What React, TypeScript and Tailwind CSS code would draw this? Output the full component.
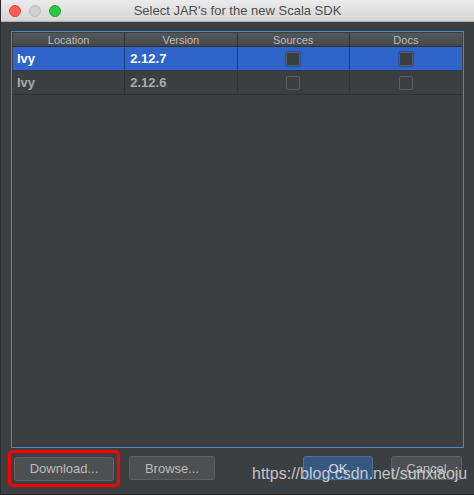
import React from "react";

interface JarRow {
  location: string;
  version: string;
  selected: boolean;
}

const rows: JarRow[] = [
  { location: "Ivy", version: "2.12.7", selected: true },
  { location: "Ivy", version: "2.12.6", selected: false },
];

const Checkbox: React.FC<{ active: boolean }> = ({ active }) =>
  active ? (
    <div className="w-[14px] h-[14px] rounded-[2px] bg-[#3c3f41] border border-[#5b5e60] shadow-[0_0_0_1px_#2a4f96]" />
  ) : (
    <div className="w-[14px] h-[14px] rounded-[2px] border border-[#5a5d5f]" />
  );

const Button: React.FC<{ label: string; primary?: boolean; className?: string }> = ({
  label,
  primary,
  className = "",
}) => (
  <button
    className={
      (primary
        ? "bg-[#365880] border-[#4c708c] text-[#d6dde6] "
        : "bg-[#4c5052] border-[#5e6162] text-[#bbbbbb] ") +
      "h-[24px] rounded-[3px] border text-[13px] leading-none " +
      className
    }
  >
    {label}
  </button>
);

export default function App() {
  return (
    <div
      className="relative w-[474px] h-[495px] bg-[#3c3f41] flex flex-col overflow-hidden border-l border-b border-[#2b2b2b]"
      style={{ fontFamily: '"Liberation Sans", Arial, sans-serif' }}
    >
      {/* Title bar */}
      <div className="h-[22px] grid grid-cols-[1fr_auto_1fr] items-center bg-gradient-to-b from-[#ebebeb] to-[#d5d5d5] border-b border-[#b3b3b3]">
        <div className="flex items-center gap-[8px] pl-[8px]">
          <div className="w-[12px] h-[12px] rounded-full bg-[#fc5f57] border border-[#e0443e]" />
          <div className="w-[12px] h-[12px] rounded-full bg-[#cfcfcf] border border-[#bfbfbf]" />
          <div className="w-[12px] h-[12px] rounded-full bg-[#2bc840] border border-[#1aab29]" />
        </div>
        <div className="text-[13px] text-[#4d4d4d]">Select JAR's for the new Scala SDK</div>
        <div />
      </div>

      {/* Table */}
      <div className="px-[10px] pt-[9px]">
        <div className="h-[417px] border border-[#4a88c7] p-[1px]">
          <div className="grid grid-cols-4 h-[14px] bg-gradient-to-b from-[#53575a] to-[#45494b] border-b border-[#2f3133]">
            {["Location", "Version", "Sources", "Docs"].map((h, i) => (
              <div
                key={h}
                className={
                  "text-[11px] leading-[14px] text-[#bbbbbb] text-center " +
                  (i < 3 ? "border-r border-[#2f3133]" : "")
                }
              >
                {h}
              </div>
            ))}
          </div>
          {rows.map((r, idx) => (
            <div
              key={idx}
              className={
                "grid grid-cols-4 h-[24px] border-b " +
                (r.selected ? "bg-[#2f65ca] border-[#2d3a52]" : "bg-[#3c3f41] border-[#2f3133]")
              }
            >
              <div
                className={
                  "flex items-center pl-[4px] text-[13px] font-bold border-r " +
                  (r.selected ? "text-white border-[#1f3e78]" : "text-[#a9abac] border-[#2f3133]")
                }
              >
                {r.location}
              </div>
              <div
                className={
                  "flex items-center pl-[5px] text-[13px] font-bold border-r " +
                  (r.selected ? "text-white border-[#1f3e78]" : "text-[#a9abac] border-[#2f3133]")
                }
              >
                {r.version}
              </div>
              <div
                className={
                  "flex items-center justify-center border-r " +
                  (r.selected ? "border-[#1f3e78]" : "border-[#2f3133]")
                }
              >
                <Checkbox active={r.selected} />
              </div>
              <div className="flex items-center justify-center">
                <Checkbox active={r.selected} />
              </div>
            </div>
          ))}
        </div>
      </div>

      {/* Footer */}
      <div className="flex items-center pl-[7px] pr-[12px] pt-[2px]">
        <div className="border-[3px] border-[#ff0000] rounded-[5px] p-[3px]">
          <Button label="Download..." className="w-[100px]" />
        </div>
        <Button label="Browse..." className="w-[86px] ml-[9px]" />
        <div className="flex-1" />
        <Button label="OK" primary className="w-[70px]" />
        <Button label="Cancel" className="w-[71px] ml-[18px]" />
      </div>

      {/* Watermark */}
      <div className="absolute left-[251px] top-[464px] text-[16px] leading-[20px] text-[#e6e6e6]/80 whitespace-nowrap pointer-events-none">
        https://blog.csdn.net/sunxiaoju
      </div>
    </div>
  );
}
